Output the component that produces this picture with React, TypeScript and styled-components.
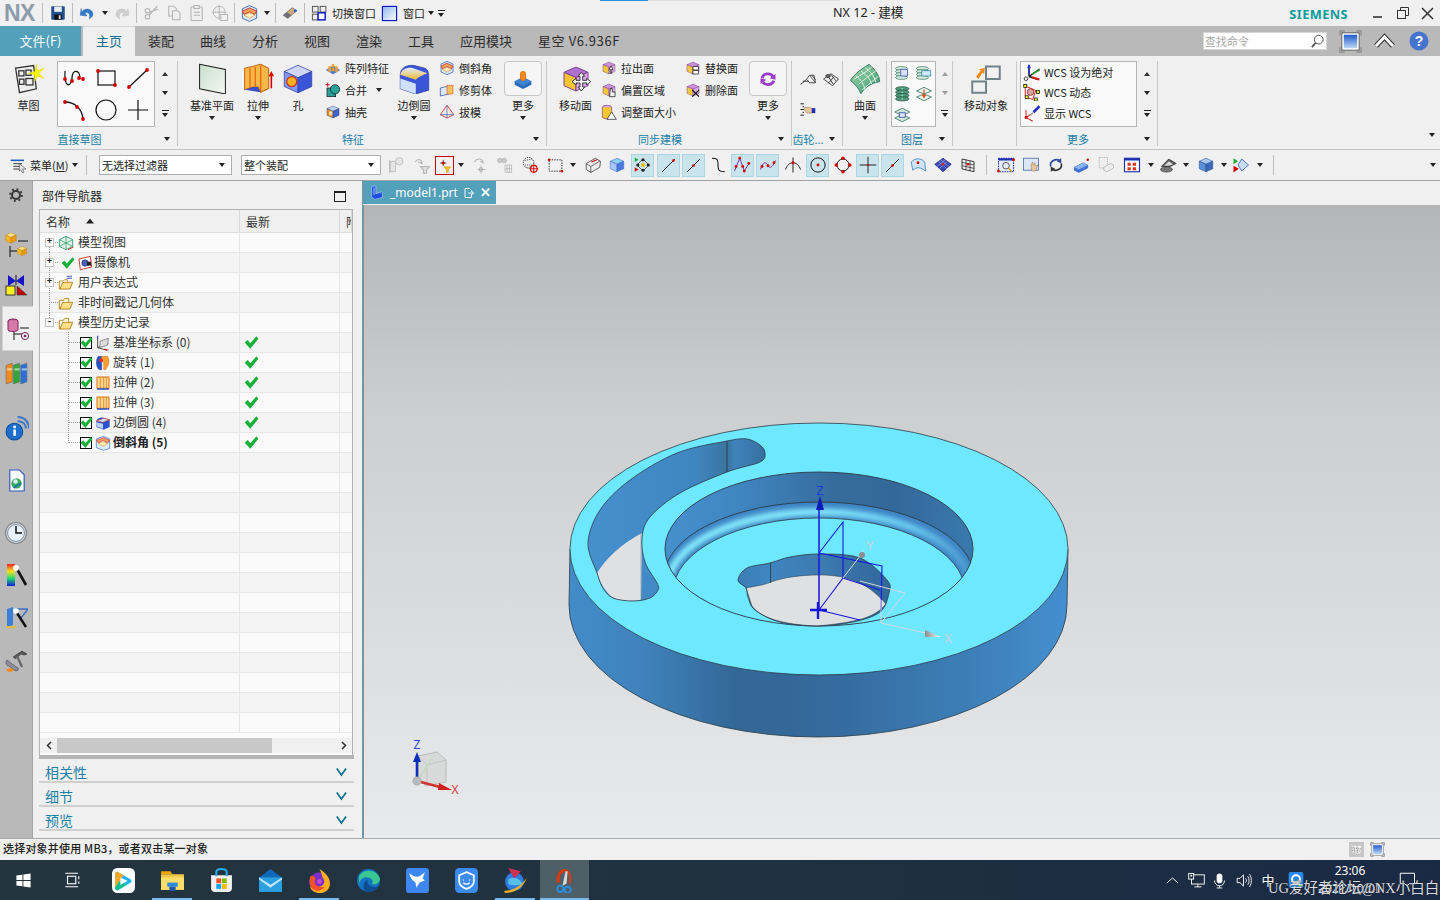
import React, { ReactNode } from "react";
import styled, { createGlobalStyle, css } from "styled-components";

const Global = createGlobalStyle`
  html, body { margin: 0; padding: 0; background: #f0f0f0; overflow: hidden; }
  * { box-sizing: border-box; }
  body { font-family: "Noto Sans CJK SC", "Noto Sans", sans-serif; font-size: 11px; color: #222; }
`;

/* ---------- page frame ---------- */
const Page = styled.div`
  position: relative; width: 1440px; height: 900px; display: flex; flex-direction: column; overflow: hidden; background: #f0f0f0;
`;
const Progress = styled.div`
  position: absolute; left: 600px; top: 0; width: 240px; height: 1px; background: linear-gradient(90deg, #2a8fe0 0 48px, #dcdcdc 48px);
`;
const TitleBar = styled.div`height: 26px; display: flex; align-items: center; background: #f0f0f0; flex: none;`;
const Logo = styled.div`
  width: 36px; padding-left: 4px; font: 700 23px/26px "Liberation Sans", sans-serif; color: #8c9cab; letter-spacing: -0.5px;
`;
const Qat = styled.div`width: 797px; display: flex; align-items: center; height: 26px;`;
const Title = styled.div`font-size: 12.6px; line-height: 26px; color: #222; white-space: nowrap; font-family: "Noto Sans", "Noto Sans CJK SC", sans-serif;`;
const Siemens = styled.div`
  margin: 0 18px 0 auto; font: 700 12.8px/26px "Noto Sans", sans-serif; color: #079b9b; letter-spacing: 0.4px; padding-top: 2px;
`;
const WinBtns = styled.div`display: flex; width: 74px; height: 26px;`;
const WinBtn = styled.div`flex: 1; display: flex; align-items: center; justify-content: center;`;
const QatText = styled.span<{ $ml?: number }>`font-size: 11px; line-height: 26px; white-space: nowrap; margin-left: ${p => p.$ml ?? 0}px;`;

const Cell = styled.div<{ $w: number }>`flex: none; width: ${p => p.$w}px; height: 23px; display: flex; align-items: center; justify-content: center;`;
const CellFace = styled.div<{ $on?: boolean; $red?: boolean }>`
  width: 23px; height: 23px; display: flex; align-items: center; justify-content: center; flex: none;
  ${p => p.$on && css`background: #c9e4ec; border: 1px solid #a9d6e2;`}
  ${p => p.$red && css`width: 19px; height: 19px; border: 1px solid #c40000;`}
`;
const VSep = styled.div<{ $l?: number; $r?: number; $h?: number }>`
  flex: none; width: 1px; height: ${p => p.$h ?? 20}px; background: #bdbdbd; margin: 0 ${p => p.$r ?? 0}px 0 ${p => p.$l ?? 0}px;
`;
const CaretGlyph = styled.i<{ $up?: boolean; $c?: string; $ml?: number; $big?: boolean }>`
  display: block; width: 0; height: 0; border-left: 3.5px solid transparent; border-right: 3.5px solid transparent; margin-left: ${p => p.$ml ?? 0}px;
  ${p => p.$up ? css`border-bottom: 4px solid ${p.$c ?? "#222"};` : css`border-top: 4px solid ${p.$c ?? "#222"};`}
  ${p => p.$big && css`transform: scale(1.3);`}
`;
const MoreGlyph = styled.div`
  display: flex; flex-direction: column; align-items: center; gap: 2px;
  &::before { content: ""; width: 7px; height: 1px; background: #222; }
`;

const TabBar = styled.div`height: 30px; background: #b9b9b9; display: flex; flex: none; align-items: flex-end;`;
const FileTab = styled.div`
  width: 81px; height: 30px; background: #53a0bb; color: #fff; font-size: 13px; line-height: 29px; text-align: center; margin-right: 2px;
`;
const Tab = styled.div<{ $active?: boolean; $w: number; $wide?: boolean }>`
  width: ${p => p.$w}px; height: ${p => p.$active ? 29 : 30}px; text-align: center; font-size: 13px; line-height: ${p => p.$active ? 28 : 29}px; white-space: nowrap;
  color: ${p => p.$active ? "#116f8d" : "#2b2b2b"}; background: ${p => p.$active ? "#f0f0f0" : "transparent"};
  ${p => p.$active && css`box-shadow: 0 -1px 0 #d5d5d5;`}
  ${p => p.$wide && css`letter-spacing: 0.6px;`}
`;
const Search = styled.div`
  margin: 0 0 6px auto; width: 124px; height: 18px; background: #fff; border: 1px solid #d5d5d5; display: flex; align-items: center; padding: 0 1px;
  color: #a8a8a8; font-size: 11px; justify-content: space-between;
`;
const TabTools = styled.div`display: flex; height: 30px; width: 113px; align-items: center; justify-content: flex-start; padding-left: 12px; gap: 9px;`;
const CollapseSvg = styled.svg`margin: 0 2px; display: block;`;
const HelpSvg = styled.svg`margin-left: 2px; display: block;`;

/* ---------- ribbon ---------- */
const Ribbon = styled.div`height: 94px; flex: none; display: flex; padding-top: 5px; background: #f0f0f0; border-bottom: 1px solid #c4c4c4; position: relative;`;
const Group = styled.div<{ $w: number; $noSep?: boolean }>`
  width: ${p => p.$w}px; height: 85px; flex: none; display: flex; flex-direction: column; border-right: 1px solid ${p => p.$noSep ? "transparent" : "#c9c9c9"};
`;
const GroupBody = styled.div<{ $pl?: number }>`height: 71px; display: flex; align-items: flex-start; padding-left: ${p => p.$pl ?? 0}px;`;
const GroupFoot = styled.div<{ $pl?: number }>`height: 14px; display: flex; align-items: center; padding-left: ${p => p.$pl ?? 0}px;`;
const GroupLabel = styled.div`flex: 1; text-align: center; color: #1b7fa6; font-size: 11px; line-height: 14px; white-space: nowrap; overflow: hidden;`;
const GroupCorner = styled.div`width: 18px; display: flex; justify-content: center; padding-right: 2px;`;
const RibbonEnd = styled.div`flex: 1; display: flex; align-items: flex-end; justify-content: flex-end; padding: 0 5px 9px 0; height: 85px;`;

const Big = styled.div<{ $w: number; $ml?: number }>`
  width: ${p => p.$w}px; margin-left: ${p => p.$ml ?? 0}px; flex: none; display: flex; flex-direction: column; align-items: center;
`;
const BigIcon = styled.div<{ $box?: boolean }>`
  height: 35px; display: flex; align-items: center; justify-content: center; align-self: stretch; margin-bottom: 2px;
  ${p => p.$box && css`border: 1px solid #c6c6c6; border-radius: 4px; background: #f5f5f5;`}
`;
const BigLabel = styled.div`font-size: 11px; line-height: 14px; white-space: nowrap; color: #222;`;
const BigCaret = styled.div`margin-top: 4px;`;

const Gallery = styled.div<{ $w: number; $ml?: number }>`
  width: ${p => p.$w}px; height: 66px; margin-left: ${p => p.$ml ?? 0}px; flex: none; background: #f9f9f9; border: 1px solid #b5b5b5; display: grid; grid-template-columns: repeat(${p => (p.$w > 70 ? 3 : 2)}, 1fr); grid-auto-rows: 1fr; align-items: center; justify-items: center;
`;
const ListGallery = styled.div<{ $w: number; $ml?: number }>`
  width: ${p => p.$w}px; height: 66px; margin-left: ${p => p.$ml ?? 0}px; flex: none; background: #f9f9f9; border: 1px solid #b5b5b5; display: flex; flex-direction: column; padding: 0 0 3px 2px;
`;
const ListRow = styled.div`flex: 1; display: flex; align-items: center; gap: 3px; font: 11px/14px "Noto Sans CJK SC", sans-serif; white-space: nowrap;`;
const Arrows = styled.div<{ $w: number }>`
  width: ${p => p.$w}px; height: 66px; flex: none; display: flex; flex-direction: column; align-items: center; justify-content: space-around; padding: 4px 0 3px;
`;
const SmallCol = styled.div<{ $w: number; $ml?: number }>`
  width: ${p => p.$w}px; margin: -4px 0 0 ${p => p.$ml ?? 0}px; flex: none; display: flex; flex-direction: column;
`;
const SmallRow = styled.div`height: 22px; display: flex; align-items: center; gap: 4px; font-size: 11px; line-height: 14px; white-space: nowrap;`;
const IconGrid = styled.div`display: grid; grid-template-columns: 23px 23px; grid-auto-rows: 30px; padding: 3px 0 0 4px; justify-items: center; align-items: center;`;

/* ---------- selection bar ---------- */
const SelBar = styled.div`height: 31px; flex: none; display: flex; align-items: center; background: #f0f0f0; border-bottom: 1px solid #a3a3a3; padding-left: 10px;`;
const MenuBtn = styled.div`width: 76px; display: flex; align-items: center; gap: 4px; font-size: 11px; white-space: nowrap; u { text-decoration: underline; }`;
const Select = styled.div<{ $w: number; $ml: number }>`
  width: ${p => p.$w}px; height: 20px; margin-left: ${p => p.$ml}px; background: #fff; border: 1px solid #aeaeae; display: flex; align-items: center; justify-content: space-between; padding: 0 6px 0 2px; font-size: 11px; flex: none;
`;

/* ---------- main ---------- */
const Main = styled.div`flex: 1; min-height: 0; display: flex;`;
const Rail = styled.div`width: 33px; flex: none; background: #b9b9b9; border-right: 1px solid #a4a4a4; display: flex; flex-direction: column; padding-top: 1px;`;
const RailItem = styled.div<{ $mt: number; $active?: boolean }>`
  margin-top: ${p => p.$mt}px; height: ${p => p.$active ? 45 : 30}px; flex: none; display: flex; align-items: center; justify-content: center;
  ${p => p.$active && css`background: #f0f0f0; margin-left: 2px; margin-right: -1px; border: 1px solid #d4d4d4; border-right: 0;`}
`;
const NavPanel = styled.div`width: 330px; flex: none; background: #f0f0f0; border-right: 1px solid #8e8e8e; display: flex; flex-direction: column; padding-left: 6px;`;
const NavHead = styled.div`height: 28px; flex: none; display: flex; align-items: center; justify-content: space-between; padding: 0 16px 0 3px; font-size: 12px;`;
const MaxBox = styled.div`width: 12px; height: 11px; border: 1px solid #222; border-top-width: 2px; margin-top: 2px;`;
const TreeBox = styled.div`width: 314px; height: 546px; flex: none; border: 1px solid #b3b3b3; border-bottom: 0; background: #fafafa; display: flex; flex-direction: column; overflow: hidden;`;
const TreeHead = styled.div`height: 23px; flex: none; display: flex; background: #f0f0f0; border-bottom: 1px solid #dedede;`;
const HeadCell = styled.div<{ $w: number }>`
  width: ${p => p.$w}px; flex: none; overflow: hidden; white-space: nowrap; display: flex; align-items: center; gap: 17px; padding-left: 6px; font-size: 12px; border-right: 1px solid #d8d8d8; color: #333;
`;
const Rows = styled.div`height: 500px; flex: none; overflow: hidden;`;
const Row = styled.div<{ $alt: boolean }>`
  position: relative; height: 20px; display: flex; background: ${p => p.$alt ? "#f4f4f4" : "#fafafa"}; border-bottom: 1px solid #e6e6e6;
`;
const NameCell = styled.div<{ $pl: number; $bold?: boolean }>`
  width: 200px; flex: none; border-right: 1px solid #e6e6e6; display: flex; align-items: center; padding-left: ${p => p.$pl}px; gap: 4px; font-size: 12px; line-height: 16px; white-space: nowrap; color: #333;
  ${p => p.$bold && css`font-weight: 700; color: #222;`}
`;
const NameText = styled.span<{ $ml: number }>`margin: -2px 0 0 ${p => p.$ml}px;`;
const TickSlot = styled.div`margin-right: -2px; flex: none;`;
const StateCell = styled.div`width: 100px; flex: none; border-right: 1px solid #e6e6e6; display: flex; align-items: center; padding-left: 4px;`;
const Expander = styled.div`
  position: absolute; left: 5px; top: 5px; width: 9px; height: 9px; background: #fafafa; border: 1px solid #c4c4c4; font: 700 9px/7px "Liberation Mono", monospace; text-align: center; color: #222; z-index: 2;
`;
const DotV = styled.div<{ $l: number; $t: number; $h: number }>`
  position: absolute; left: ${p => p.$l}px; top: ${p => p.$t}px; height: ${p => p.$h}px; width: 0; border-left: 1px dotted #999;
`;
const DotH = styled.div<{ $l: number; $w: number }>`
  position: absolute; left: ${p => p.$l}px; top: 9px; width: ${p => p.$w}px; height: 0; border-top: 1px dotted #999;
`;
const Check = styled.div`width: 12px; height: 12px; border: 1px solid #111; background: #fff; display: flex; align-items: center; justify-content: center; flex: none; margin-right: -1px;`;
const ScrollBar = styled.div`height: 20px; flex: none; padding-top: 5px; background: #fafafa; display: flex;`;
const ScrollTrack = styled.div`flex: 1; height: 15px; display: flex; align-items: center; background: #f0f0f0;`;
const ScrollArrow = styled.div`width: 17px; text-align: center; display: flex; justify-content: center;`;
const ScrollThumb = styled.div`width: 215px; height: 15px; background: #c8c8c8;`;
const ScrollRest = styled.div`flex: 1;`;
const Splitter = styled.div`width: 315px; height: 4px; flex: none; background: #b4b4b4;`;
const Accordion = styled.div`
  width: 315px; height: 24px; flex: none; display: flex; align-items: center; justify-content: space-between; padding: 4px 5px 0 6px; border-bottom: 2px solid #d0d0d0;
  color: #1b7fa6; font-size: 14px; line-height: 18px;
`;

const Work = styled.div`flex: 1; min-width: 0; display: flex; flex-direction: column;`;
const DocStrip = styled.div`height: 24px; flex: none; background: #f0f0f0; display: flex;`;
const DocTab = styled.div`
  width: 133px; height: 23px; background: #53a0bb; color: #fff; display: flex; align-items: center; padding-left: 6px; font: 12px/23px "Noto Sans", sans-serif; gap: 4px;
`;
const DocName = styled.span`width: 71px; padding-left: 2px; white-space: nowrap;`;
const DocClose = styled.span`font: 700 13px/20px "Liberation Sans", sans-serif; margin-left: 1px;`;
const Viewport = styled.div`flex: 1; min-height: 0; border-left: 1px solid #53a0bb; background: linear-gradient(180deg, #b4b5b6 0%, #cdced0 33%, #e9eaec 100%);`;
const ModelSvg = styled.svg`display: block; width: 1077px; height: 633px; margin-left: -1px;`;

const Status = styled.div`height: 22px; flex: none; border-top: 1px solid #a9a9a9; background: #f0f0f0; display: flex; align-items: center; padding: 0 55px 3px 3px; font-size: 11px; font-weight: 500; justify-content: space-between; color: #222; letter-spacing: 0.2px;`;
const StatusIcons = styled.div`display: flex; gap: 6px; align-items: center; margin-top: 3px;`;
const StatusFlag = styled.div`width: 15px; height: 15px; background: #c6c6c6; display: flex; align-items: center; justify-content: center;`;

const Taskbar = styled.div`position: relative; height: 40px; flex: none; background: linear-gradient(90deg, #24353f 0%, #20323f 45%, #1a2a45 100%); display: flex; color: #fff;`;
const TaskCell = styled.div<{ $w: number; $active?: boolean; $run?: boolean }>`
  position: relative; width: ${p => p.$w}px; height: 40px; flex: none; display: flex; align-items: center; justify-content: center;
  ${p => p.$active && css`background: #4f5f68;`}
  ${p => p.$run && css`&::after { content: ""; position: absolute; bottom: 0; left: ${p.$active ? 0 : 4.5}px; right: ${p.$active ? 0 : 4.5}px; height: 2px; background: #76b9ed; }`}
`;
const Spacer = styled.div`flex: 1;`;
const TrayText = styled.span`font-size: 13px; line-height: 16px;`;
const Clock = styled.div`width: 78px; text-align: center; font: 12px/18px "Noto Sans", sans-serif; padding-top: 2px; flex: none;`;
const Watermark = styled.div`
  position: absolute; left: 1268px; top: 19px; font: 14.5px/18px "Liberation Serif", "Noto Sans CJK SC", serif; color: #d9dee2; white-space: nowrap; text-shadow: 0 0 1px #111;
`;
const IcoSvg = styled.svg`display: block; flex: none;`;

/* ---------- icons ---------- */
const Dot = (x: number, y: number, c = "#d40000", r = 1.9) => <circle cx={x} cy={y} r={r} fill={c} />;
const cube = (t: string, l: string, r: string, stroke = "#33407a") => (
  <g stroke={stroke} strokeWidth=".7" strokeLinejoin="round">
    <polygon points="12,3 21,7 12,11 3,7" fill={t} /><polygon points="3,7 12,11 12,21 3,17" fill={l} /><polygon points="12,11 21,7 21,17 12,21" fill={r} />
  </g>
);
const faceBase = (extra: ReactNode) => <>{cube("#c890d8", "#f4c73c", "#dcb0e4", "#7c3c90")}{extra}</>;
const layers = (extra: ReactNode) => (
  <g>
    {[6, 10, 14, 18].map(y => <ellipse key={y} cx="10" cy={y} rx="8" ry="2.6" fill="#cfe6d8" stroke="#2e6d54" strokeWidth=".8" />)}
    {extra}
  </g>
);
const faceMarker = (d: string) => <path d={d} fill="#fff" stroke="#111" strokeWidth="1.1" />;

const I: Record<string, ReactNode> = {
  save: <><rect x="3" y="3" width="18" height="18" rx="1" fill="#234f8d" /><rect x="7" y="3.5" width="10" height="7" fill="#e8eef6" /><rect x="7" y="14" width="10" height="7" fill="#111" /><rect x="13" y="15" width="2.5" height="5" fill="#ddd" /></>,
  undo: <path d="M5 11 C8 5 18 5 20 13 C20 16 18 18 15 20 C17 14 14 10 9 12 L12 16 L3 15 L4 6 Z" fill="#2e7bcc" stroke="#1a5aa0" strokeWidth=".5" />,
  redo: <path d="M19 11 C16 5 6 5 4 13 C4 16 6 18 9 20 C7 14 10 10 15 12 L12 16 L21 15 L20 6 Z" fill="#cfcfcf" stroke="#b0b0b0" strokeWidth=".5" />,
  cut: <g fill="none" stroke="#b5b5b5" strokeWidth="1.6"><path d="M19 3 L8 15 M20 7 L8 11" /><circle cx="6" cy="17" r="3" /><circle cx="6" cy="9" r="3" /></g>,
  copy: <g fill="#efefef" stroke="#b5b5b5" strokeWidth="1.4"><path d="M5 3 H12 L15 6 V16 H5 Z" /><path d="M10 9 H17 L20 12 V21 H10 Z" /></g>,
  paste: <g fill="#efefef" stroke="#b5b5b5" strokeWidth="1.4"><rect x="4" y="4" width="15" height="18" rx="1" /><rect x="8" y="2" width="7" height="4" /><path d="M8 11 H16 M8 15 H16" /></g>,
  pasteTarget: <g fill="none" stroke="#b5b5b5" strokeWidth="1.3"><circle cx="11" cy="11" r="8" /><path d="M11 1 V21 M1 11 H21" /><rect x="13" y="14" width="9" height="8" fill="#efefef" /></g>,
  chamfer: <><polygon points="3,6 12,2 21,6 21,18 12,22 3,18" fill="#d9e8f8" stroke="#2a55aa" strokeWidth="1" /><polygon points="3,9 12,5 21,9 19,13 12,10 5,13" fill="#f0a35c" stroke="#c02020" strokeWidth="1" /><polygon points="5,14 12,11 19,14 12,18" fill="#fff4c8" stroke="#e28020" strokeWidth=".8" /></>,
  eraser: <><polygon points="3,15 15,5 21,9 9,19" fill="#d4a878" stroke="#555" strokeWidth=".8" /><polygon points="3,15 8,11 14,15 9,19" fill="#6d6d7a" /><circle cx="19" cy="9" r="2" fill="#2e6ccc" /></>,
  switchWin: <><g fill="none" stroke="#555" strokeWidth="1.4"><rect x="2" y="2" width="8" height="8" /><rect x="13" y="2" width="8" height="8" /><rect x="2" y="13" width="8" height="8" /></g><rect x="10" y="11" width="10" height="10" fill="#fff" stroke="#0814c8" strokeWidth="2" /></>,
  window: <><defs><linearGradient id="wg" x1="0" y1="0" x2="1" y2="1"><stop offset="0" stopColor="#8fb7e8" /><stop offset="1" stopColor="#fff" /></linearGradient></defs><rect x="2" y="2" width="20" height="20" fill="url(#wg)" stroke="#0814c8" strokeWidth="1.6" /></>,

  sketch: <><polygon points="2,4 16,2 18,20 5,23" fill="#eee" stroke="#333" strokeWidth="1" /><rect x="4.5" y="6" width="4" height="4" fill="#eee" stroke="#333" /><rect x="10" y="5.5" width="4" height="4" fill="#eee" stroke="#333" /><rect x="5" y="12.5" width="3.5" height="4" fill="#eee" stroke="#333" /><rect x="10" y="12" width="5.5" height="5" fill="#eee" stroke="#333" /><polygon points="18,1 19,6 24,4 20,8 24,12 19,10 17,14 16.5,9 12,8 17,6.5" fill="#f8f400" stroke="#e8e000" strokeWidth=".4" /></>,
  skSpline: <><path d="M3 5 C2 22 9 22 10 12 C10 3 18 3 18 13" fill="none" stroke="#111" strokeWidth="1.2" />{Dot(3, 13)}{Dot(10, 15)}{Dot(17, 12)}{Dot(21, 13)}</>,
  skRect: <><rect x="4" y="5" width="17" height="14" fill="none" stroke="#111" strokeWidth="1.2" />{Dot(4, 5)}{Dot(21, 19)}</>,
  skLine: <><path d="M3 21 L21 4" stroke="#111" strokeWidth="1.2" />{Dot(3, 21)}{Dot(21, 4)}</>,
  skArc: <><path d="M3 4 C12 4 20 10 21 21" fill="none" stroke="#111" strokeWidth="1.3" />{Dot(3, 4)}{Dot(15, 9)}{Dot(21, 21)}</>,
  skCircle: <circle cx="12" cy="12" r="10" fill="none" stroke="#111" strokeWidth="1.2" />,
  skPlus: <path d="M12 2 V22 M2 12 H22" stroke="#111" strokeWidth="1.2" />,

  datum: <><defs><linearGradient id="dg" x1="0" y1="0" x2="1" y2="1"><stop offset="0" stopColor="#c8e0cc" /><stop offset="1" stopColor="#f4f8f4" /></linearGradient></defs><polygon points="2,1 22,5 22,24 2,20" fill="url(#dg)" stroke="#222" strokeWidth=".8" /></>,
  extrude: <><polygon points="2,4 14,1 20,4 20,19 14,22 12,18 8,18 2,20" fill="#f7b84a" stroke="#c86a10" strokeWidth=".8" /><path d="M6 4 V20 M10 3 V18 M14 2 V22" stroke="#f06a10" strokeWidth="1" /><polygon points="2,20 8,18 12,18 14,22" fill="#3a50c0" /><path d="M22 19 V9" stroke="#d00" strokeWidth="1.2" /><polygon points="22,6 20,10 24,10" fill="#d00" /></>,
  hole: <><polygon points="12,1 23,6 12,11 1,6" fill="#cfd6f8" stroke="#3040a0" strokeWidth=".6" /><polygon points="1,6 12,11 12,23 1,18" fill="#7f9af0" stroke="#3040a0" strokeWidth=".6" /><polygon points="12,11 23,6 23,18 12,23" fill="#3a55d8" stroke="#3040a0" strokeWidth=".6" /><circle cx="7" cy="14" r="4" fill="#f8b020" stroke="#d03020" /></>,
  pattern: <><polygon points="2,15 12,9 22,15 12,21" fill="#4f7fd8" stroke="#2a4a98" strokeWidth=".6" />{[[7, 12], [12, 9], [17, 12], [12, 15], [7, 16], [17, 16]].map(([x, y]) => <rect key={`${x}${y}`} x={x - 2} y={y - 3} width="4" height="5" rx="1.4" fill="#f5a030" />)}</>,
  unite: <><path d="M4 1 V7 M1 4 H7" stroke="#d00" strokeWidth="1.4" /><rect x="3" y="9" width="13" height="13" fill="#2aa198" stroke="#111" /><circle cx="15" cy="11" r="7" fill="#2aa198" stroke="#111" /></>,
  shell: <>{cube("#bcd2f4", "#f0861e", "#3b66cf")}<rect x="6" y="11" width="5" height="6" fill="#f8e0a0" /></>,
  blend: <><defs><linearGradient id="bg1" x1="0" y1="0" x2="0" y2="1"><stop offset="0" stopColor="#dde9fb" /><stop offset="1" stopColor="#f4bd2c" /></linearGradient></defs><path d="M1 9 C1 4 6 1 12 2 L20 4 C23 5 23 9 23 11 L23 21 L13 24 L1 20 Z" fill="#3b55d8" stroke="#3040a0" strokeWidth=".6" /><path d="M1 9 C2 5 6 3 11 4 L22 8 C20 9 16 10 13 13 Z" fill="url(#bg1)" /><path d="M1 12 L13 16 L13 24 L1 20 Z" fill="#cfe0fa" /></>,
  trim: <><polygon points="2,9 15,6 15,18 2,21" fill="#dbe7fb" stroke="#2a40a8" /><rect x="12" y="5" width="9" height="13" fill="#f4c258" stroke="#d03020" strokeDasharray="2 1" /></>,
  draft: <><polygon points="12,2 22,16 12,21 2,16" fill="#f9f0e0" stroke="#d02020" strokeWidth="1.2" /><path d="M12 2 V21 M2 16 L22 16" stroke="#2b55c8" strokeWidth="1" /></>,
  more1: <><polygon points="2,15 12,10 22,15 12,20" fill="#3a86d8" stroke="#1e5aa8" strokeWidth=".6" /><path d="M2 15 V19 L12 24 L22 19 V15 L12 20 Z" fill="#2a68bc" /><rect x="9" y="3" width="6" height="11" rx="2.6" fill="#f58a14" stroke="#d86a10" /></>,
  moveFace: <>{cube("#b070d0", "#f6c62e", "#d8a8e8", "#7c3c90")}<g fill="#f4f4f4" stroke="#333" strokeWidth=".7"><path d="M16 7 L18.5 10 H17 V13 H20 V11.5 L23 14 L20 16.5 V15 H17 V18 H18.5 L16 21 L13.5 18 H15 V15 H12 V16.5 L9 14 L12 11.5 V13 H15 V10 H13.5 Z" /></g></>,
  pull: faceBase(faceMarker("M15 9 L18 14 H16 V20 H14 V14 H12 Z")),
  offset: faceBase(faceMarker("M14 10 H17 V15 H21 V22 H13 Z")),
  resize: <><ellipse cx="9" cy="5" rx="7" ry="3" fill="#d8a8e8" stroke="#7c3c90" /><path d="M2 5 V20 C4 23 14 23 16 20 V5" fill="#f6c62e" stroke="#7c3c90" /><polygon points="16,12 23,23 9,23" fill="#fff" stroke="#111" /></>,
  replace: faceBase(<><rect x="12" y="10" width="8" height="5" fill="#fff" stroke="#111" /><rect x="12" y="16" width="8" height="5" fill="#fff" stroke="#111" /></>),
  del: faceBase(<path d="M11 12 L21 22 M21 12 L11 22" stroke="#111" strokeWidth="1.8" />),
  sync: <g fill="none" stroke="#9a3cc8" strokeWidth="3.4"><path d="M5 11 C6 5 15 4 18 9" /><path d="M19 14 C17 20 9 20 6 16" /><polygon points="21,6 21,13 14,11" fill="#9a3cc8" stroke="none" /><polygon points="3,18 3,11 10,13" fill="#9a3cc8" stroke="none" /></g>,
  gearA: <g fill="none" stroke="#222" strokeWidth="1.1"><path d="M2 19 C6 17 10 13 14 7 L20 7 L22 17 L14 17 L11 13" /><path d="M15 8 L21 16 M17 7 L22 13" strokeWidth=".9" /><path d="M5 15 L12 15" /></g>,
  gearB: <g stroke="#222" strokeWidth="1"><path d="M2 12 L12 5 L22 12 L14 21 Z" fill="#e8e8e8" /><path d="M8 8 L15 19 M12 6 L19 15 M16 9 L8 18" fill="none" /><ellipse cx="8" cy="8" rx="3" ry="2" fill="#777" /></g>,
  gearC: <><path d="M2 4 H7 M5 8 H7 M2 12 H7 M5 16 H7 M2 20 H7" stroke="#111" strokeWidth="1.3" /><path d="M8 9 H15 L19 11 V17 H11 L8 13 Z" fill="#e8c49a" stroke="#8a6a48" strokeWidth=".7" /><rect x="18" y="10" width="5" height="7" fill="#1c2fb0" /></>,
  surface: <><defs><linearGradient id="sfg" x1="0" y1="0" x2="1" y2="1"><stop offset="0" stopColor="#9ed6a4" /><stop offset="1" stopColor="#3e9a78" /></linearGradient></defs><path d="M1 13 C6 6 12 3 15 1 C20 5 23 10 23 14 C17 15 12 18 9 23 C7 19 5 16 1 13 Z" fill="url(#sfg)" stroke="#3a7a66" strokeWidth=".7" /><path d="M5 9.5 C9 12 11 16 12 20 M9 6 C13 9 16 12 17 16 M12 3.5 C16 6 19 10 20 14.5 M4 12 C9 9 14 6 17 3 M7 16 C12 12 16 9 20 6 M10 20 C14 17 18 13 22 10" stroke="#eaf6ea" strokeWidth=".7" fill="none" /></>,
  moveObj: <><rect x="12" y="2" width="11" height="10" fill="#f2f2f2" stroke="#6f8288" strokeWidth="1.6" /><rect x="1" y="14" width="11" height="9" fill="#f2f2f2" stroke="#6f8288" strokeWidth="1.6" /><polygon points="4,10 8,5 6,4.5 11,3 10.5,8 9,7 6,12" fill="#f18a1c" /></>,
  lay1: layers(<rect x="9" y="7" width="9" height="9" fill="#d8e4fb" stroke="#2a40a8" strokeWidth=".9" />),
  lay2: layers(<rect x="9" y="9" width="12" height="7" fill="#cfe8f6" stroke="#1a78aa" strokeWidth=".9" />),
  lay3: <g>{[5, 9.5, 14, 18.5].map(y => <ellipse key={y} cx="11" cy={y} rx="9" ry="2.8" fill="#4f9a76" stroke="#1c4f3c" strokeWidth=".9" />)}{[5, 9.5, 14, 18.5].map(y => <circle key={y} cx="11" cy={y} r="1" fill="#b8d8ff" />)}</g>,
  lay4: <g><polygon points="12,3 22,8 12,12 2,8" fill="#e8f4ea" stroke="#2e6d54" /><polygon points="12,12 22,16 12,21 2,16" fill="#e8f4ea" stroke="#2e6d54" /><path d="M12 6 V15" stroke="#e04a18" strokeWidth="1.6" /><polygon points="12,18 9,13 15,13" fill="#e04a18" /></g>,
  lay5: <g><polygon points="11,3 21,8 11,13 1,8" fill="#cfe6d8" stroke="#2e6d54" /><polygon points="11,11 21,16 11,21 1,16" fill="#cfe6d8" stroke="#2e6d54" /><rect x="7" y="9" width="8" height="6" fill="#d8e4fb" stroke="#2a40a8" /></g>,
  wcsAbs: <><path d="M8 18 V3 M8 18 L22 8 M8 18 L20 22" strokeWidth="1.8" stroke="#111" /><polygon points="8,1 5.5,7 10.5,7" fill="#1c2fd0" /><path d="M8 8 V15" stroke="#1c2fd0" strokeWidth="2" /><path d="M12 15 L22 9" stroke="#2a9a30" strokeWidth="2.5" /><path d="M12 19 L22 22" stroke="#d02020" strokeWidth="2.5" /><circle cx="4" cy="21" r="2.4" fill="none" stroke="#111" /></>,
  wcsDyn: <><polygon points="3,4 17,10 13,22 3,18" fill="none" stroke="#d02020" strokeWidth="1.3" /><circle cx="10" cy="12" r="4.5" fill="#d8a0a0" stroke="#902020" />{[[3, 4], [20, 12], [5, 19], [17, 22]].map(([x, y]) => <rect key={`${x}`} x={x - 2} y={y - 2} width="4" height="4" fill="#ff0" stroke="#111" />)}</>,
  wcsShow: <><path d="M4 18 L4 8 M4 18 L13 23 M4 18 L12 13" stroke="#e03030" strokeWidth="1.4" />{Dot(4, 18)}<path d="M14 11 L22 3" stroke="#2030c8" strokeWidth="3.6" /><path d="M10 15 L14 11" stroke="#aaa" strokeWidth="2" /></>,

  menu: <><path d="M1 5 H21" stroke="#1a5fc0" strokeWidth="2.4" /><path d="M5 10 H18 M5 14 H16 M5 18 H14" stroke="#333" strokeWidth="1.4" /><polygon points="14,10 24,18 19,18 21,23 18,23 16,19 14,21" fill="#e8e8e8" stroke="#333" strokeWidth=".8" /></>,
  f1: <g fill="#e4e4e4" stroke="#b5b5b5" strokeWidth="1"><rect x="3" y="7" width="7" height="14" /><circle cx="15" cy="7" r="5" /><path d="M2 5 V23" /></g>,
  f2: <g stroke="#b5b5b5" strokeWidth="1.5" fill="none"><path d="M3 8 C7 2 12 5 12 10 L7 8" /><polygon points="10,14 22,14 18,19 18,23 14,23 14,19" fill="#ddd" /></g>,
  f3: <><path d="M10 3 V13 M5 8 H15" stroke="#111" strokeWidth="1.1" /><circle cx="10" cy="8" r="2.5" fill="#d40000" /><polygon points="11,14 22,14 18,19 18,23 15,23 15,19" fill="#f8c020" stroke="#b88000" strokeWidth=".6" /></>,
  f4: <g stroke="#b5b5b5" fill="none" strokeWidth="1.4"><path d="M3 8 C7 2 14 3 15 9 L11 7" /><path d="M12 13 V23 M7 18 H18" /><circle cx="12" cy="18" r="2.4" /></g>,
  f5: <g fill="#c8c8c8" stroke="#aaa" strokeWidth=".8"><circle cx="5" cy="6" r="3" /><circle cx="11" cy="6" r="3" /><rect x="12" y="12" width="9" height="10" fill="#eee" /><path d="M15 12 V22 M18 12 V22 M12 17 H21" /></g>,
  sel1: <><circle cx="10" cy="9" r="7" fill="none" stroke="#222" strokeDasharray="1.6 1.4" strokeWidth="1.3" /><path d="M5 6 L15 4 M5 12 L15 12" stroke="#222" strokeDasharray="1.5 1.5" /><circle cx="17" cy="17" r="4.5" fill="none" stroke="#d40000" strokeWidth="1.5" /><path d="M17 11 V23 M11 17 H23" stroke="#d40000" strokeWidth="1.2" /></>,
  sel2: <><rect x="3" y="4" width="18" height="16" fill="none" stroke="#111" strokeWidth="1.2" strokeDasharray="2 1.6" />{Dot(3, 4)}{Dot(21, 20)}</>,
  sel3: <><polygon points="3,10 15,3 22,7 21,15 9,22 3,18" fill="#eee" stroke="#444" strokeWidth="1.1" /><path d="M3 10 L9 14 L21 7 M9 14 V22" stroke="#444" fill="none" /><path d="M10 8 L17 5" stroke="#d40000" strokeWidth="1.4" /></>,
  sel4: <>{cube("#8cd0f0", "#a8c8f8", "#4a78e0", "#3a64c8")}</>,
  snapA: <><polygon points="12,4 20,12 12,20 4,12" fill="none" stroke="#333" strokeWidth="1" />{Dot(12, 12, "#f0c000", 2.6)}{[[12, 5], [19, 12], [12, 19], [5, 12]].map(([x, y]) => <circle key={`${x}${y}`} cx={x} cy={y} r="2.1" fill="#222" />)}<polygon points="1,2 6,5 1,8" fill="#1caa30" /><polygon points="1,15 6,18 1,21" fill="#d40000" /></>,
  sl: <><path d="M3 21 L21 3" stroke="#111" strokeWidth="1.2" />{Dot(19, 5)}</>,
  slm: <><path d="M3 21 L21 3" stroke="#111" strokeWidth="1.2" />{Dot(12, 12)}</>,
  sCurve: <path d="M4 3 C11 3 12 4 12 11 C12 19 13 21 21 21" fill="none" stroke="#111" strokeWidth="1.4" />,
  zig: <><path d="M2 20 L9 3 L15 20 L22 9" fill="none" stroke="#7a20a8" strokeWidth="1.2" />{Dot(4, 14)}{Dot(9, 3)}{Dot(13, 14)}{Dot(15, 20)}{Dot(21, 10)}</>,
  wave: <><path d="M2 18 C6 6 10 8 12 13 C15 18 19 13 22 6" fill="none" stroke="#7a20a8" strokeWidth="1.2" />{Dot(4, 14)}{Dot(12, 13)}{Dot(20, 9)}</>,
  tangent: <><path d="M2 18 C6 6 18 6 22 18" fill="none" stroke="#111" strokeWidth="1.2" /><path d="M12 2 V22" stroke="#111" strokeWidth="1.2" /><circle cx="12" cy="9" r="2" fill="#d40000" /></>,
  cen: <><circle cx="12" cy="12" r="9.5" fill="none" stroke="#111" strokeWidth="1.3" />{Dot(12, 12)}</>,
  quad: <><circle cx="12" cy="12" r="8" fill="none" stroke="#111" strokeWidth="1.2" />{Dot(12, 3, "#d40000", 2.4)}{Dot(21, 12, "#d40000", 2.4)}{Dot(12, 21, "#d40000", 2.4)}{Dot(3, 12, "#d40000", 2.4)}</>,
  crossX: <><path d="M12 1 V23 M1 12 H23" stroke="#111" strokeWidth="1.2" />{Dot(12, 12, "#d40000", 1.4)}</>,
  bend: <><path d="M3 8 C9 1 18 4 21 8 L22 20 C16 15 10 14 5 19 Z" fill="#cfe6f8" stroke="#2c78b8" />{Dot(12, 9)}</>,
  mesh: <><polygon points="12,3 23,11 12,21 1,11" fill="#3848b8" stroke="#1c2878" /><path d="M6 7 L17 17 M9 5 L20 14 M18 7 L7 17 M15 5 L4 14" stroke="#c8c8e8" strokeWidth=".7" /><circle cx="12" cy="11" r="1.8" fill="#d02020" /></>,
  grid: <><polygon points="3,3 21,7 21,22 3,18" fill="none" stroke="#111" strokeWidth="1.2" /><path d="M9 4 V19 M15 6 V21 M3 8 L21 12 M3 13 L21 17" stroke="#111" />{Dot(12, 11)}</>,
  vzoom: <><rect x="2" y="3" width="20" height="18" fill="#e4ecf8" stroke="#1c2fb0" strokeWidth="1.4" strokeDasharray="2 1.2" /><rect x="2" y="3" width="20" height="3" fill="#1c2fb0" /><circle cx="12" cy="13" r="4.4" fill="none" stroke="#555" strokeWidth="1.3" /><path d="M15 16 L20 21" stroke="#c89a20" strokeWidth="1.6" />{Dot(2, 20)}{Dot(22, 5)}</>,
  vpan: <><rect x="2" y="3" width="20" height="16" fill="#dce6f6" stroke="#5a7ab0" strokeWidth="1.2" /><path d="M12 12 L14 8 L15 12 L17 9 L18 13 L21 12 L18 20 H13 Z" fill="#e8c49a" stroke="#9a7a50" strokeWidth=".7" /></>,
  vrot: <g fill="none" stroke="#2a4a9a" strokeWidth="2.2"><path d="M5 14 C3 7 11 3 17 6" /><path d="M19 10 C21 17 13 21 7 18" stroke="#333" /><polygon points="19,3 19,10 13,7" fill="#2a4a9a" stroke="none" /><polygon points="5,21 5,14 11,17" fill="#333" stroke="none" /></g>,
  vpersp: <><polygon points="3,15 15,9 21,12 21,16 9,22 3,19" fill="#3b72d8" stroke="#1e4aa0" strokeWidth=".6" /><polygon points="3,15 15,9 21,12 9,18" fill="#88b4f0" />{Dot(21, 5, "#d40000", 1.6)}</>,
  vcopy: <g fill="#eee" stroke="#b5b5b5" strokeWidth="1.1"><rect x="3" y="2" width="11" height="14" strokeDasharray="2 1" /><polygon points="9,15 18,10 22,12 22,16 13,21 9,19" /></g>,
  vlayout: <><rect x="2" y="3" width="20" height="18" fill="#fff" stroke="#1c2fb0" strokeWidth="1.5" /><rect x="2" y="3" width="20" height="3" fill="#1c2fb0" />{[[6, 9], [13, 9], [6, 15], [13, 15]].map(([x, y]) => <rect key={`${x}${y}`} x={x} y={y} width="4.4" height="4" fill="#e0341c" />)}</>,
  vshade: <><polygon points="3,14 13,4 23,10 13,15" fill="#5a5a5a" stroke="#222" strokeWidth=".8" /><polygon points="7,13 13,7 19,11 13,13" fill="#d8d8d8" /><ellipse cx="10" cy="18" rx="8" ry="3.5" fill="#777" stroke="#222" strokeWidth=".7" /></>,
  vcube: <>{cube("#a8c8f0", "#5a90d8", "#3a68b8", "#2a4a88")}</>,
  vflag: <><polygon points="2,3 8,7 2,11" fill="#1caa30" /><polygon points="2,13 9,17 2,22" fill="#d40000" /><polygon points="13,4 22,12 13,20 8,12" fill="#c8dcf8" stroke="#2a55a8" /></>,
  gear: <g><circle cx="12" cy="12" r="6" fill="none" stroke="#333" strokeWidth="3" /><circle cx="12" cy="12" r="9" fill="none" stroke="#333" strokeWidth="2.5" strokeDasharray="3 4" /></g>,
  railAsm: <><g transform="translate(0 -2) scale(.58)">{cube("#fbe18a", "#f6b820", "#e99a10", "#b87810")}</g><g transform="translate(12 12) scale(.5)">{cube("#fbe18a", "#f6b820", "#e99a10", "#b87810")}</g><path d="M14 8 H24 M6 18 H13 M6 13 V24" stroke="#111" strokeWidth="1" /></>,
  railCon: <><polygon points="4,2 12,8 4,13" fill="#1414c8" /><polygon points="20,2 12,8 20,13" fill="#1414c8" /><path d="M12 2 V12" stroke="#111" /><rect x="2" y="13" width="9" height="9" fill="#f8f020" stroke="#333" /><polygon points="13,13 23,22 13,22" fill="#c40000" stroke="#333" strokeWidth=".6" /></>,
  railPart: <><ellipse cx="7" cy="4" rx="5" ry="2" fill="#c46a9a" stroke="#802060" /><path d="M2 4 V13 C3 15 11 15 12 13 V4" fill="#d87aa8" stroke="#802060" /><path d="M14 11 H23 M8 17 H16 M8 15 V23" stroke="#111" /><circle cx="19" cy="19" r="3.6" fill="none" stroke="#802060" /><circle cx="19" cy="19" r="1.3" fill="#802060" /></>,
  railBook: <>{[["#f28a1c", 2], ["#2fa838", 9], ["#2a70d8", 16]].map(([c, x]) => <g key={String(x)}><polygon points={`${x},5 ${Number(x) + 6},3 ${Number(x) + 6},21 ${x},23`} fill={String(c)} stroke="#666" strokeWidth=".5" /><rect x={Number(x) + 1} y="8" width="5" height="2" fill="#fff" opacity=".55" /></g>)}</>,
  railInfo: <><circle cx="10" cy="15" r="8" fill="#1c6fd0" stroke="#0e4a98" /><rect x="9" y="13" width="2.4" height="6" fill="#fff" /><circle cx="10.2" cy="10.5" r="1.4" fill="#fff" /><g fill="none" stroke="#3a78c8" strokeWidth="2"><path d="M13 5 C18 5 21 8 21 12" /><path d="M13 1 C20 1 24 6 24 12" /></g></>,
  railDoc: <><path d="M5 1 H15 L20 6 V23 H5 Z" fill="#fff" stroke="#2a55b8" strokeWidth="1.2" /><circle cx="12" cy="15" r="5.4" fill="#3aa85a" /><circle cx="11" cy="13" r="2.4" fill="#d8eef8" /><path d="M9 20 C12 17 15 16 17 15" stroke="#1c70c0" strokeWidth="1.6" fill="none" /></>,
  railClock: <><circle cx="12" cy="12" r="10.5" fill="#ccd5e4" stroke="#888" strokeWidth="1.2" /><circle cx="12" cy="12" r="8.4" fill="#e8f0fa" stroke="#5e6f88" strokeWidth=".7" /><path d="M12 5 V12 H18" fill="none" stroke="#111" strokeWidth="1.5" /></>,
  railRole: <><defs><linearGradient id="rb" x1="0" y1="0" x2="0" y2="1"><stop offset="0" stopColor="#f02020" /><stop offset=".33" stopColor="#f8e020" /><stop offset=".66" stopColor="#20d870" /><stop offset="1" stopColor="#1020d8" /></linearGradient></defs><rect x="3" y="1" width="8" height="22" fill="url(#rb)" /><path d="M13 6 L22 22" stroke="#111" strokeWidth="2.6" /><circle cx="12" cy="5" r="3" fill="#fff" /></>,
  railRole2: <><polygon points="3,3 9,1 9,19 3,21" fill="#3a80d8" /><polygon points="12,3 24,3 17,12 14,9" fill="none" stroke="#3a70c8" strokeWidth="1.4" /><path d="M2 21 H12" stroke="#e8c020" strokeWidth="1.6" /><path d="M13 7 L22 21" stroke="#111" strokeWidth="2.4" /><circle cx="12" cy="5" r="2.8" fill="#fff" /></>,
  railTool: <><path d="M9 9 L18 3 L23 6 L20 7 L17 6 L11 11" fill="#555" stroke="#333" strokeWidth=".6" /><path d="M13 8 L18 19" stroke="#666" strokeWidth="2.2" /><path d="M3 12 L8 16 L14 20 C16 22 12 24 10 22 L5 18 C2 18 1 14 3 12 Z" fill="#8a8f9a" stroke="#444" strokeWidth=".6" /><ellipse cx="6" cy="22" rx="3.4" ry="1.8" fill="#f08a1c" /></>,
  tick: <path d="M1 12 L6 8 L10 13 L20 2 L23 6 L10 22 Z" fill="#17b13a" />,
  tCam: <><polygon points="3,6 20,2 22,18 5,22" fill="#fff" stroke="#d03020" strokeWidth="1.4" /><circle cx="12" cy="12" r="4.8" fill="#4a60b8" stroke="#1c2878" /><rect x="15" y="10" width="6" height="6" fill="#222" /></>,
  tView: <><polygon points="12,2 22,7 22,17 12,22 2,17 2,7" fill="#e4f4ea" stroke="#1d9464" strokeWidth="1.2" /><path d="M12 2 V22 M2 7 L22 17 M22 7 L2 17" stroke="#1d9464" /><path d="M15 22 L23 18" stroke="#d03020" strokeWidth="1.5" /></>,
  tFolder: <><path d="M2 8 V21 H18 L22 11 H7 L3 21" fill="#ffe08a" stroke="#a87000" strokeWidth="1.2" strokeLinejoin="round" /><path d="M2 8 H8 L10 5 H16 V11" fill="#fff3c8" stroke="#a87000" strokeWidth="1.1" /></>,
  tExpr: <><path d="M2 9 V21 H18 L22 11 H7 L3 21" fill="#ffe08a" stroke="#a87000" strokeWidth="1.2" /><path d="M2 9 H8 L10 7 H14 V11" fill="#fff3c8" stroke="#a87000" /><path d="M13 2 H21 M13 5 H21" stroke="#1c2fb0" strokeWidth="1.2" /></>,
  tDatum: <><path d="M4 19 L4 4 M4 19 L20 13 M4 19 L18 23" stroke="#222" strokeWidth="1.2" /><polygon points="8,9 20,5 19,15 7,19" fill="#ddd" stroke="#333" strokeWidth=".7" /><path d="M4 1 V5" stroke="#1c2fd0" strokeWidth="1.6" /><path d="M14 21 L20 23" stroke="#d02020" strokeWidth="1.6" /></>,
  tRev: <><path d="M5 2 C1 6 1 18 6 22 H10 V2 Z" fill="#2a50c8" stroke="#1a2878" strokeWidth=".6" /><path d="M10 2 H19 C22 6 22 14 16 22 H13 V10 H10 Z" fill="#f7a030" stroke="#c86010" strokeWidth=".6" /><circle cx="9" cy="8" r="3" fill="#e03020" /></>,
  tExt: <><rect x="3" y="3" width="18" height="17" fill="#f8d890" stroke="#e0700c" strokeWidth="1.5" /><path d="M8 3 V20 M13 3 V20 M17 3 V20" stroke="#e0700c" /><path d="M3 21 H21" stroke="#2a50c8" strokeWidth="2.2" /></>,
  tBlend: <><path d="M2 9 C3 5 8 3 13 4 L22 7 V18 L13 22 L2 18 Z" fill="#2a50d0" /><path d="M2 9 L13 5 L22 7 L12 11 Z" fill="#cfe0fa" stroke="#d03020" strokeWidth=".9" /><path d="M2 11 L12 13 V21 L2 17 Z" fill="#b8d0f4" /></>,
  tCham: <><polygon points="2,6 13,2 22,6 22,20 13,23 2,19" fill="#dcebfb" stroke="#2a70c8" strokeWidth="1" /><polygon points="2,8 13,4 22,8 19,12 12,8 5,12" fill="#f5a060" stroke="#d02020" strokeWidth=".9" /><polygon points="5,13 12,10 19,13 12,17" fill="#fff2b0" stroke="#e08020" strokeWidth=".7" /></>,
  partTab: <><path d="M4 4 C4 2 8 1 11 2 V14 L20 11 C22 11 22 13 21 14 L22 20 L9 23 L4 19 Z" fill="#1f4fe0" stroke="#bcd0ff" strokeWidth="1" /><path d="M8 4 V16" stroke="#a8c4ff" strokeWidth="1.6" /></>,
  popout: <g fill="none" stroke="#fff" strokeWidth="1.8"><path d="M17 14 V21 H4 V3 H13 L17 7 V9" /><path d="M10 12 H21 M17 8 L21 12 L17 16" /></g>,
  find: <g fill="none" stroke="#555" strokeWidth="1.6"><circle cx="14" cy="9" r="7" fill="#fff" /><path d="M9 14 L3 21" strokeWidth="3" /></g>,
  frame: <><path d="M1 6 V1 H6 M18 1 H23 V6 M23 18 V23 H18 M6 23 H1 V18" fill="none" stroke="#909090" strokeWidth="1.4" /><defs><linearGradient id="fg" x1="0" y1="0" x2="0" y2="1"><stop offset="0" stopColor="#1452c8" /><stop offset="1" stopColor="#c8e0f8" /></linearGradient></defs><rect x="4" y="4" width="16" height="16" rx="1" fill="url(#fg)" stroke="#fff" strokeWidth="2" /><rect x="3" y="3" width="18" height="18" fill="none" stroke="#444" strokeWidth=".8" /></>,
  flagGray: <><path d="M3 3 L21 5 L19 20 L5 18 Z" fill="#eee" /><path d="M6 4 L9 18 M13 4 L14 19 M3 9 L21 11 M4 14 L20 15" stroke="#777" strokeWidth="1.6" strokeDasharray="2 2" /></>,

  tWin: <g fill="#fff"><polygon points="2,5 10.5,3.8 10.5,11.4 2,11.4" /><polygon points="11.8,3.6 22,2 22,11.4 11.8,11.4" /><polygon points="2,12.6 10.5,12.6 10.5,20.2 2,19" /><polygon points="11.8,12.6 22,12.6 22,22 11.8,20.4" /></g>,
  tTask: <g fill="none" stroke="#fff" strokeWidth="1.5"><rect x="6" y="7" width="11" height="10" /><path d="M3 3 H20 M3 21 H20 M21 7 V11 M21 14 V17" /></g>,
  tVideo: <><rect x="1" y="0" width="22" height="24" rx="5" fill="#fff" /><path d="M7 4 L19 11 C20 12 20 13 19 14 L7 21 C5 22 4 21 4 19 V6 C4 4 5 3 7 4 Z" fill="#1eb4f0" /><path d="M4 6 C4 4 5 3 7 4 L12 7 L4 19 Z" fill="#f8a820" /><path d="M4 19 C4 21 5 22 7 21 L15 16 L9 12 Z" fill="#10c090" /><polygon points="9,9 16,12.5 9,16" fill="#fff" /></>,
  tExplorer: <><path d="M1 6 V21 H23 V6 Z" fill="#f3c84a" /><path d="M1 3 H10 L12 6 H1 Z" fill="#f0a500" /><rect x="1" y="9" width="22" height="12" fill="#ffdd6a" /><rect x="7" y="14" width="10" height="4" fill="#2a8ae0" /><rect x="9" y="18" width="6" height="4" fill="#1c5aa8" /></>,
  tStore: <><path d="M2 7 H22 V20 C22 22 20 23 19 23 H5 C4 23 2 22 2 20 Z" fill="#f0f0f0" /><path d="M7 8 V4 C7 2 9 1 12 1 C15 1 17 2 17 4 V8" fill="none" stroke="#28a8e8" strokeWidth="2" /><rect x="7" y="10" width="4.6" height="4.6" fill="#f25022" /><rect x="12.4" y="10" width="4.6" height="4.6" fill="#7fba00" /><rect x="7" y="15.4" width="4.6" height="4.6" fill="#00a4ef" /><rect x="12.4" y="15.4" width="4.6" height="4.6" fill="#ffb900" /></>,
  tMail: <><polygon points="12,1 23,9 12,16 1,9" fill="#1068b8" /><rect x="1" y="9" width="22" height="14" fill="#2c9fe0" /><polygon points="1,9 12,16 23,9 23,11 12,19 1,11" fill="#bfe6fa" /></>,
  tFox: <><circle cx="12" cy="14" r="10" fill="#7a2fc8" /><path d="M12 1 C17 4 22 9 22 15 C22 20 18 24 12 24 C8 24 4 22 3 18 C6 20 9 20 12 18 C16 15 16 9 12 1 Z" fill="#fbb01c" /><path d="M3 8 C2 14 3 18 5 20 C9 23 14 22 17 18 C14 19 10 18 9 14 C9 10 7 6 3 8 Z" fill="#f2512a" /><circle cx="12" cy="13" r="4.6" fill="#7a2fc8" /><circle cx="12" cy="13" r="2.4" fill="#c84ac8" /></>,
  tEdge: <><circle cx="12" cy="12" r="11" fill="#1474c4" /><path d="M3 8 C6 1 19 0 23 10 C23 14 19 17 15 15 C18 12 14 9 11 9 C6 8 3 12 3 17 Z" fill="#38c890" /><path d="M10 23 C6 21 6 14 11 11 C10 17 16 20 22 17 C20 21 15 24 10 23 Z" fill="#0c4e90" /></>,
  tBird: <><rect x="1" y="0" width="22" height="24" rx="3" fill="#3f87f0" /><path d="M4 5 C8 8 11 9 14 8 L19 4 L17 10 L19 12 L14 14 L11 19 L10 14 C7 12 5 9 4 5 Z" fill="#fff" /></>,
  tShield: <><rect x="1" y="0" width="22" height="24" rx="4" fill="#3a8af0" /><path d="M12 4 L19 7 V13 C19 17 15 19 12 20 C9 19 5 17 5 13 V7 Z" fill="none" stroke="#fff" strokeWidth="1.7" /><path d="M9 11 V12 M15 11 V12 M9 14 C10 16 14 16 15 14" stroke="#fff" strokeWidth="1.3" fill="none" /></>,
  tNx: <><circle cx="11" cy="13" r="9" fill="#2e7ce0" /><path d="M5 11 C9 8 15 9 19 15 C15 17 8 17 5 15 Z" fill="#55c0e8" /><polygon points="5,0 17,3 11,10" fill="#d03050" /><path d="M1 22 C9 22 18 17 23 9 C20 18 12 24 2 24 Z" fill="#f0b020" /></>,
  tSnip: <><path d="M13 2 C7 3 5 8 6 14" fill="none" stroke="#d83a10" strokeWidth="3" /><path d="M14 2 C18 5 18 10 17 15" fill="none" stroke="#d83a10" strokeWidth="2" /><polygon points="13,3 15,3 14,15 10,17" fill="#d8d8d8" /><circle cx="8" cy="20" r="3" fill="none" stroke="#2c8cd8" strokeWidth="2" /><circle cx="15" cy="21" r="3" fill="none" stroke="#2c8cd8" strokeWidth="2" /></>,
  trChev: <path d="M3 16 L12 8 L21 16" fill="none" stroke="#fff" strokeWidth="1.5" />,
  trNet: <g fill="none" stroke="#fff" strokeWidth="1.3"><rect x="5" y="4" width="18" height="13" /><path d="M14 17 V21 M9 21 H19" /><rect x="1" y="2" width="7" height="8" fill="#1d2e42" /><rect x="3.4" y="4" width="2.4" height="2.4" fill="#fff" stroke="none" /></g>,
  trMic: <g fill="#fff"><rect x="8" y="2" width="8" height="14" rx="4" /><path d="M5 12 C5 22 19 22 19 12" fill="none" stroke="#fff" strokeWidth="1.3" /><path d="M12 19 V22 M8 22.5 H16" stroke="#fff" strokeWidth="1.3" /></g>,
  trVol: <g fill="none" stroke="#fff" strokeWidth="1.3"><path d="M3 9 V15 H7 L12 20 V4 L7 9 Z" /><path d="M15 9 C16.5 11 16.5 13 15 15 M18 6 C20.5 10 20.5 14 18 18 M20.5 3 C24 9 24 15 20.5 21" /></g>,
  trQ: <><rect x="1" y="0" width="22" height="24" rx="3" fill="#2b8af0" /><circle cx="12" cy="11" r="6" fill="none" stroke="#fff" strokeWidth="3" /><path d="M13 15 L19 21" stroke="#fff" strokeWidth="2" /><circle cx="18" cy="20" r="2" fill="#b8f020" /></>,
  trNote: <path d="M3 3 H22 V17 H15 L12 20 L9 17 H3 Z" fill="none" stroke="#fff" strokeWidth="1.3" />,
  chevBlue: <path d="M3 6 L11 17 L19 6" fill="none" stroke="#0f7698" strokeWidth="3" />,
};

const Ico = ({ n, s = 20 }: { n: string; s?: number }) => (
  <IcoSvg width={s} height={s} viewBox="0 0 24 24">{I[n]}</IcoSvg>
);

/* ---------- toolbars data ---------- */
type Item = { k: "t"; w: number; n: string; on?: boolean; s?: number; red?: boolean } | { k: "c"; w: number } | { k: "s"; l: number; r: number } | { k: "x"; txt: string; ml?: number } | { k: "m"; w: number };
const t = (w: number, n: string, on?: boolean, s?: number, red?: boolean): Item => ({ k: "t", w, n, on, s, red });
const c = (w: number): Item => ({ k: "c", w });
const s = (l: number, r: number): Item => ({ k: "s", l, r });

const renderItems = (items: Item[]) =>
  items.map((it, i) => {
    if (it.k === "t") return <Cell key={i} $w={it.w}><CellFace $on={it.on} $red={it.red}><Ico n={it.n} s={it.s ?? 18} /></CellFace></Cell>;
    if (it.k === "c") return <Cell key={i} $w={it.w}><CaretGlyph /></Cell>;
    if (it.k === "m") return <Cell key={i} $w={it.w}><MoreGlyph><CaretGlyph /></MoreGlyph></Cell>;
    if (it.k === "x") return <QatText key={i} $ml={it.ml}>{it.txt}</QatText>;
    return <VSep key={i} $l={it.l} $r={it.r} />;
  });

const qat: Item[] = [
  s(6, 4), t(22, "save"), s(3, 3), t(22, "undo"), c(14), t(20, "redo", false), s(4, 4), t(22, "cut"), t(22, "copy"), t(24, "paste"), t(22, "pasteTarget"), s(3, 0),
  t(28, "chamfer", false, 19), c(8), s(4, 0), t(28, "eraser"), s(0, 3), t(22, "switchWin", false, 17), { k: "x", txt: "切换窗口", ml: 2 }, t(26, "window", false, 17), { k: "x", txt: "窗口", ml: 1 }, c(11), { k: "m", w: 10 },
];
const selA: Item[] = [
  t(25, "f1"), t(25, "f2"), t(21, "f3", false, 15, true), c(12), t(28, "f4"), t(20, "f5"), t(30, "sel1"), t(20, "sel2", false, 17), c(16), t(24, "sel3"), t(24, "sel4"),
  t(27, "snapA", true), t(24, "sl", true, 17), t(26, "slm", true, 17), t(23, "sCurve"), t(26, "zig", true), t(25, "wave", true), t(25, "tangent"), t(25, "cen", true), t(25, "quad"), t(25, "crossX", true), t(25, "slm", true, 17), t(25, "bend"), t(25, "mesh"), t(25, "grid", false, 16), s(6, 6.5),
  t(25, "vzoom"), t(25, "vpan"), t(25, "vrot"), t(25, "vpersp"), t(25, "vcopy"), t(27, "vlayout"), c(10), t(25, "vshade"), c(11), t(29, "vcube"), c(7), t(27, "vflag"), c(11), s(7, 0),
];

const Arrow3 = ({ dim }: { dim?: boolean }) => (
  <><CaretGlyph $up $c={dim ? "#9f9f9f" : "#333"} /><CaretGlyph $c={dim ? "#9f9f9f" : "#222"} /><MoreGlyph><CaretGlyph /></MoreGlyph></>
);
const Foot = ({ label, pl }: { label?: string; pl?: number }) => (
  <GroupFoot $pl={pl}><GroupLabel>{label}</GroupLabel><GroupCorner><CaretGlyph /></GroupCorner></GroupFoot>
);
const BigBtn = ({ w, ml, n, label, caret, box, s: size }: { w: number; ml?: number; n: string; label: string; caret?: boolean; box?: boolean; s?: number }) => (
  <Big $w={w} $ml={ml}>
    <BigIcon $box={box}><Ico n={n} s={size ?? 30} /></BigIcon>
    <BigLabel>{label}</BigLabel>
    {caret && <BigCaret><CaretGlyph /></BigCaret>}
  </Big>
);
const Small = ({ n, txt, caret }: { n: string; txt: string; caret?: boolean }) => (
  <SmallRow><Ico n={n} s={16} /><span>{txt}</span>{caret && <CaretGlyph $ml={5} />}</SmallRow>
);

/* ---------- tree ---------- */
type TreeRow = { txt?: string; n?: string; pl?: number; exp?: "+" | "-"; top?: boolean; ok?: boolean; bold?: boolean; tick?: boolean; child?: boolean; last?: boolean; horiz?: boolean };
const tree: TreeRow[] = [
  { txt: "模型视图", n: "tView", pl: 18, exp: "+", top: true },
  { txt: "摄像机", n: "tCam", pl: 21, exp: "+", top: true, tick: true },
  { txt: "用户表达式", n: "tExpr", pl: 18, exp: "+", top: true },
  { txt: "非时间戳记几何体", n: "tFolder", pl: 18, top: true, horiz: true },
  { txt: "模型历史记录", n: "tFolder", pl: 18, exp: "-", top: true, last: true },
  { txt: "基准坐标系 (0)", n: "tDatum", pl: 40, child: true, ok: true },
  { txt: "旋转 (1)", n: "tRev", pl: 40, child: true, ok: true },
  { txt: "拉伸 (2)", n: "tExt", pl: 40, child: true, ok: true },
  { txt: "拉伸 (3)", n: "tExt", pl: 40, child: true, ok: true },
  { txt: "边倒圆 (4)", n: "tBlend", pl: 40, child: true, ok: true },
  { txt: "倒斜角 (5)", n: "tCham", pl: 40, child: true, ok: true, bold: true, last: true },
];
const allRows: TreeRow[] = [...tree, ...Array.from({ length: 14 }, () => ({} as TreeRow))];

const railItems: { mt: number; n: string; active?: boolean; s?: number }[] = [
  { mt: -2, n: "gear", s: 16 }, { mt: 20, n: "railAsm", s: 24 }, { mt: 10, n: "railCon", s: 24 }, { mt: 6, n: "railPart", s: 24, active: true }, { mt: 6, n: "railBook", s: 25 },
  { mt: 26, n: "railInfo", s: 25 }, { mt: 22, n: "railDoc", s: 23 }, { mt: 23, n: "railClock", s: 24 }, { mt: 12, n: "railRole", s: 24 }, { mt: 13, n: "railRole2", s: 24 }, { mt: 12, n: "railTool", s: 24 },
];

/* ---------- model ---------- */
const smooth = (pts: number[][], closed = true) => {
  const n = pts.length;
  const g = (i: number) => (closed ? pts[(i + n) % n] : pts[Math.max(0, Math.min(n - 1, i))]);
  let d = `M${pts[0][0]},${pts[0][1]}`;
  for (let i = 0; i < (closed ? n : n - 1); i++) {
    const [p0, p1, p2, p3] = [g(i - 1), g(i), g(i + 1), g(i + 2)];
    d += ` C${(p1[0] + (p2[0] - p0[0]) / 6).toFixed(1)},${(p1[1] + (p2[1] - p0[1]) / 6).toFixed(1)} ${(p2[0] - (p3[0] - p1[0]) / 6).toFixed(1)},${(p2[1] - (p3[1] - p1[1]) / 6).toFixed(1)} ${p2[0]},${p2[1]}`;
  }
  return closed ? d + " Z" : d;
};
const slot = smooth([[727, 441], [747, 439], [760, 445], [765, 453], [760, 462], [727, 472], [680, 493], [650, 517], [642, 538], [645, 562], [657, 583], [658, 590], [650, 598], [633, 601], [613, 598], [603, 588], [597, 573], [588, 543], [600, 510], [630, 480], [677, 453]]);
const slotGray = "M597,573 Q612,549 642,533 L641,600 Q622,603 612,597 Q602,589 597,573 Z";
const holeOuter = smooth([[746, 588], [738, 580], [747, 568], [770, 563], [790, 557], [820, 554], [860, 558], [887, 580], [889, 593], [880, 612], [853, 622], [817, 626], [780, 622], [755, 610], [748, 597]]);
const holeFloor = "M746,588 C755,586 765,585 771,582 C785,577 802,575 820,575 C850,575 870,585 886,604 C875,617 860,622 817,626 C790,625 762,620 752,606 Z";
const TOP = "#6ee8ff";
const LINE = "#2d3b44";

const Model = () => (
  <ModelSvg viewBox="363 205 1077 633">
    <defs>
      <linearGradient id="side" gradientUnits="userSpaceOnUse" x1="569" y1="0" x2="1068" y2="0">
        <stop offset="0" stopColor="#428cca" /><stop offset=".15" stopColor="#3f82bb" /><stop offset=".34" stopColor="#326796" /><stop offset=".5" stopColor="#34699b" /><stop offset=".8" stopColor="#3d7eb7" /><stop offset="1" stopColor="#448fd0" />
      </linearGradient>
      <linearGradient id="bore" gradientUnits="userSpaceOnUse" x1="665" y1="0" x2="973" y2="0">
        <stop offset="0" stopColor="#4690ce" /><stop offset=".25" stopColor="#3f85c0" /><stop offset=".55" stopColor="#366c9c" /><stop offset=".75" stopColor="#33689a" /><stop offset="1" stopColor="#3a79ae" />
      </linearGradient>
      <linearGradient id="slotW" gradientUnits="userSpaceOnUse" x1="588" y1="0" x2="767" y2="0">
        <stop offset="0" stopColor="#4690ce" /><stop offset=".6" stopColor="#3f86c0" /><stop offset=".78" stopColor="#39749f" /><stop offset=".82" stopColor="#3f83bb" /><stop offset="1" stopColor="#366e9e" />
      </linearGradient>
      <linearGradient id="holeW" gradientUnits="userSpaceOnUse" x1="738" y1="0" x2="889" y2="0">
        <stop offset="0" stopColor="#3c7fb6" /><stop offset=".2" stopColor="#3f85c0" /><stop offset=".5" stopColor="#3d7cb2" /><stop offset="1" stopColor="#32689a" />
      </linearGradient>
      <linearGradient id="fillet" gradientUnits="userSpaceOnUse" x1="665" y1="0" x2="973" y2="0">
        <stop offset="0" stopColor="#88eeff" /><stop offset=".5" stopColor="#86ecff" /><stop offset=".8" stopColor="#6cccf0" /><stop offset="1" stopColor="#4a98d0" />
      </linearGradient>
      <clipPath id="boreClip"><ellipse cx="819" cy="549" rx="154" ry="77" /></clipPath>
      <filter id="soft" x="-5%" y="-5%" width="110%" height="110%"><feGaussianBlur stdDeviation="2.4" /></filter>
      <linearGradient id="coneW" x1="0" y1="0" x2="1" y2="0"><stop offset="0" stopColor="#8b8b8b" /><stop offset="1" stopColor="#fff" /></linearGradient>
    </defs>
    <path d="M570,549 L569,605 A249,132 0 0 0 1067,605 L1068,549 Z" fill="url(#side)" stroke={LINE} strokeWidth=".8" />
    <ellipse cx="819" cy="549" rx="249" ry="126" fill={TOP} stroke={LINE} strokeWidth=".8" />

    <path d={slot} fill="url(#slotW)" />
    <path d={slotGray} fill="#dfe0e2" />
    <path d="M727,441 L727,472" stroke={LINE} strokeWidth=".9" />
    <path d="M641,533 L641,600" stroke="#7a8f9e" strokeWidth=".6" />
    <path d={slot} fill="none" stroke={LINE} strokeWidth=".8" />

    <ellipse cx="819" cy="549" rx="154" ry="77" fill="url(#bore)" />
    <g clipPath="url(#boreClip)">
      <ellipse cx="819" cy="578" rx="155" ry="76" fill="#3d84c4" stroke={LINE} strokeWidth=".9" />
      <ellipse cx="819" cy="586" rx="151" ry="74" fill="none" stroke="url(#fillet)" strokeWidth="7" filter="url(#soft)" />
      <ellipse cx="819" cy="592" rx="146" ry="74" fill={TOP} stroke={LINE} strokeWidth=".8" />
      <rect x="665" y="600" width="308" height="40" fill={TOP} />
    </g>
    <ellipse cx="819" cy="549" rx="154" ry="77" fill="none" stroke={LINE} strokeWidth=".9" />

    <path d={holeOuter} fill="url(#holeW)" />
    <path d={holeFloor} fill="#dfe0e2" />
    <path d="M770.500,563 L770.500,583" stroke={LINE} strokeWidth=".9" />
    <path d={holeOuter} fill="none" stroke={LINE} strokeWidth=".8" />
    <path d={holeFloor} fill="none" stroke={LINE} strokeWidth=".5" />

    <g fill="none" stroke="#1616e0" strokeWidth="1.1">
      <path d="M819,553 L843,522 L843,578 L819,610 M819,553 L882,566 L881,612 M843,578 L880,590 M819,610 L860,620" />
      <path d="M819,610 L819,503" strokeWidth="1.5" />
      <path d="M810,610 H827 M818,602 V619" strokeWidth="2.4" />
    </g>
    <polygon points="820,496 816,510 824,510" fill="#0b1ab8" />
    <text x="820" y="495" fontFamily="Noto Sans, sans-serif" fontSize="13" fill="#1a3ad8" textAnchor="middle">Z</text>
    <g fill="none" stroke="#d5d8da" strokeWidth="1">
      <path d="M843,578 L864,551" />
      <path d="M860,581 L905,593 L881,623 L881,600" />
      <path d="M881,623 L930,634" />
    </g>
    <circle cx="862" cy="555" r="3" fill="#8d9093" />
    <text x="870" y="550" fontFamily="Noto Sans, sans-serif" fontSize="13" fill="#cfd3d6" textAnchor="middle">Y</text>
    <polygon points="941,637 925,630 925,637" fill="url(#coneW)" />
    <text x="948" y="643" fontFamily="Noto Sans, sans-serif" fontSize="13" fill="#cfd3d6" textAnchor="middle">X</text>

    <g>
      <polygon points="418,756 437,752 446,760 446,782 426,786 418,778" fill="#d4d5d6" fillOpacity=".75" stroke="#b9baba" strokeWidth="1" />
      <path d="M418,756 L427,765 L446,760 M427,765 V786" fill="none" stroke="#c2c3c3" />
      <path d="M417,782 L432,758" stroke="#c4d8c4" strokeWidth="1.6" />
      <path d="M417,781 V760" stroke="#0c2fb8" strokeWidth="2.6" />
      <polygon points="417,752 413,762 421,762" fill="#0c2fb8" />
      <path d="M417,781 L440,787" stroke="#d03434" strokeWidth="2.6" />
      <polygon points="452,790 439,783 438,790" fill="#d02020" />
      <circle cx="417" cy="781" r="4.2" fill="#b9bcbe" stroke="#9b9d9f" strokeWidth=".5" />
      <text x="417" y="749" fontFamily="Noto Sans, sans-serif" fontSize="12" fill="#2a4ad0" textAnchor="middle">Z</text>
      <text x="455" y="794" fontFamily="Noto Sans, sans-serif" fontSize="12" fill="#d84040" textAnchor="middle">X</text>
    </g>
  </ModelSvg>
);

const tasks: { n: string; run?: boolean; active?: boolean }[] = [
  { n: "tVideo" }, { n: "tExplorer", run: true }, { n: "tStore" }, { n: "tMail" }, { n: "tFox", run: true }, { n: "tEdge" }, { n: "tBird" }, { n: "tShield" }, { n: "tNx", run: true }, { n: "tSnip", run: true, active: true },
];

const nameMargin = (r: TreeRow) => (r.tick ? -3 : r.child ? -2 : 0);

export default function App() {
  return (
    <Page>
      <Global />
      <TitleBar>
        <Logo>NX</Logo>
        <Qat>{renderItems(qat)}</Qat>
        <Title>NX 12 - 建模</Title>
        <Siemens>SIEMENS</Siemens>
        <WinBtns>
          <WinBtn>
            <svg width="12" height="12" viewBox="0 0 12 12"><path d="M1 10 H10" stroke="#333" strokeWidth="1.6" /></svg>
          </WinBtn>
          <WinBtn>
            <svg width="12" height="12" viewBox="0 0 12 12" fill="none" stroke="#333"><rect x=".5" y="3.500" width="8" height="8" /><path d="M3.500 3 V.5 H11.500 V8.500 H9" /></svg>
          </WinBtn>
          <WinBtn>
            <svg width="13" height="13" viewBox="0 0 13 13"><path d="M1 1 L12 12 M12 1 L1 12" stroke="#333" strokeWidth="1.5" /></svg>
          </WinBtn>
        </WinBtns>
      </TitleBar>

      <TabBar>
        <FileTab>文件(F)</FileTab>
        <Tab $w={52} $active>主页</Tab>
        {["装配", "曲线", "分析", "视图", "渲染", "工具"].map(x => <Tab key={x} $w={52}>{x}</Tab>)}
        <Tab $w={78}>应用模块</Tab>
        <Tab $w={108} $wide>星空 V6.936F</Tab>
        <Search><span>查找命令</span><Ico n="find" s={15} /></Search>
        <TabTools>
          <Ico n="frame" s={23} />
          <CollapseSvg width="23" height="16" viewBox="0 0 23 16"><path d="M3 13 L11.500 4 L20 13" fill="none" stroke="#333" strokeWidth="5" /><path d="M3 13 L11.500 4 L20 13" fill="none" stroke="#fff" strokeWidth="3" /></CollapseSvg>
          <HelpSvg width="20" height="20" viewBox="0 0 20 20"><circle cx="10" cy="10" r="9.500" fill="#4474cc" /><text x="10" y="15" textAnchor="middle" fill="#fff" fontSize="14" fontWeight="700" fontFamily="Liberation Sans, sans-serif">?</text></HelpSvg>
        </TabTools>
      </TabBar>

      <Ribbon>
        <Group $w={178}>
          <GroupBody>
            <BigBtn w={57} n="sketch" label="草图" s={31} />
            <Gallery $w={98}>
              {["skSpline", "skRect", "skLine", "skArc", "skCircle", "skPlus"].map(n => <Ico key={n} n={n} s={24} />)}
            </Gallery>
            <Arrows $w={20}><Arrow3 /></Arrows>
          </GroupBody>
          <Foot label="直接草图" />
        </Group>
        <Group $w={369}>
          <GroupBody $pl={1}>
            <BigBtn w={66} n="datum" label="基准平面" caret s={31} />
            <BigBtn w={26} n="extrude" label="拉伸" caret s={32} />
            <BigBtn w={54} n="hole" label="孔" s={30} />
            <SmallCol $w={71}>
              <Small n="pattern" txt="阵列特征" />
              <Small n="unite" txt="合并" caret />
              <Small n="shell" txt="抽壳" />
            </SmallCol>
            <BigBtn w={36} n="blend" label="边倒圆" caret s={31} />
            <SmallCol $w={62} $ml={7}>
              <Small n="chamfer" txt="倒斜角" />
              <Small n="trim" txt="修剪体" />
              <Small n="draft" txt="拔模" />
            </SmallCol>
            <BigBtn w={38} ml={3} n="more1" label="更多" caret box s={20} />
          </GroupBody>
          <Foot label="特征" />
        </Group>
        <Group $w={245}>
          <GroupBody $pl={1}>
            <BigBtn w={55} n="moveFace" label="移动面" s={32} />
            <SmallCol $w={84} $ml={-2}>
              <Small n="pull" txt="拉出面" />
              <Small n="offset" txt="偏置区域" />
              <Small n="resize" txt="调整面大小" />
            </SmallCol>
            <SmallCol $w={60}>
              <Small n="replace" txt="替换面" />
              <Small n="del" txt="删除面" />
            </SmallCol>
            <BigBtn w={38} ml={4} n="sync" label="更多" caret box s={20} />
          </GroupBody>
          <Foot label="同步建模" />
        </Group>
        <Group $w={51}>
          <GroupBody>
            <IconGrid>
              <Ico n="gearA" s={18} /><Ico n="gearB" s={18} /><Ico n="gearC" s={17} />
            </IconGrid>
          </GroupBody>
          <Foot label="齿轮..." />
        </Group>
        <Group $w={44}>
          <GroupBody $pl={1}><BigBtn w={42} n="surface" label="曲面" caret s={32} /></GroupBody>
        </Group>
        <Group $w={66}>
          <GroupBody>
            <Gallery $w={45} $ml={4}>
              {["lay1", "lay2", "lay3", "lay4", "lay5"].map(n => <Ico key={n} n={n} s={18} />)}
            </Gallery>
            <Arrows $w={17}><Arrow3 dim /></Arrows>
          </GroupBody>
          <Foot label="图层" pl={3} />
        </Group>
        <Group $w={64}>
          <GroupBody $pl={3}><BigBtn w={60} n="moveObj" label="移动对象" s={30} /></GroupBody>
        </Group>
        <Group $w={141}>
          <GroupBody>
            <ListGallery $w={117} $ml={3}>
              <ListRow><Ico n="wcsAbs" s={18} /><span>WCS 设为绝对</span></ListRow>
              <ListRow><Ico n="wcsDyn" s={18} /><span>WCS 动态</span></ListRow>
              <ListRow><Ico n="wcsShow" s={18} /><span>显示 WCS</span></ListRow>
            </ListGallery>
            <Arrows $w={20}><Arrow3 /></Arrows>
          </GroupBody>
          <Foot label="更多" />
        </Group>
        <RibbonEnd><CaretGlyph /></RibbonEnd>
      </Ribbon>

      <SelBar>
        <MenuBtn><Ico n="menu" s={16} /><span>菜单(<u>M</u>)</span><CaretGlyph /></MenuBtn>
        <VSep />
        <Select $w={133} $ml={12}><span>无选择过滤器</span><CaretGlyph /></Select>
        <Select $w={140} $ml={9}><span>整个装配</span><CaretGlyph /></Select>
        <Cell $w={3} />
        {renderItems(selA)}
        <Spacer />
        <Cell $w={15}><CaretGlyph /></Cell>
      </SelBar>

      <Main>
        <Rail>
          {railItems.map(r => <RailItem key={r.n} $mt={r.mt} $active={r.active}><Ico n={r.n} s={r.s} /></RailItem>)}
        </Rail>
        <NavPanel>
          <NavHead><span>部件导航器</span><MaxBox /></NavHead>
          <TreeBox>
            <TreeHead>
              <HeadCell $w={200}><span>名称</span><CaretGlyph $up $big /></HeadCell>
              <HeadCell $w={100}><span>最新</span></HeadCell>
              <HeadCell $w={12}><span>附</span></HeadCell>
            </TreeHead>
            <Rows>
              {allRows.map((r, i) => (
                <Row key={i} $alt={i % 2 === 1}>
                  {r.top && <DotV $l={9} $t={i === 0 ? 8 : -1} $h={i === 4 ? 10 : 21} />}
                  {(r.exp || r.horiz) && <DotH $l={9} $w={9} />}
                  {r.child && <DotV $l={28} $t={-1} $h={r.last ? 11 : 21} />}
                  {r.child && <DotH $l={28} $w={12} />}
                  {r.exp && <Expander>{r.exp}</Expander>}
                  <NameCell $pl={r.pl ?? 0} $bold={r.bold}>
                    {r.child && <Check><Ico n="tick" s={13} /></Check>}
                    {r.tick && <TickSlot><Ico n="tick" s={14} /></TickSlot>}
                    {r.n && <Ico n={r.n} s={16} />}
                    {r.txt && <NameText $ml={nameMargin(r)}>{r.txt}</NameText>}
                  </NameCell>
                  <StateCell>{r.ok && <Ico n="tick" s={15} />}</StateCell>
                </Row>
              ))}
            </Rows>
            <ScrollBar>
              <ScrollTrack>
                <ScrollArrow><svg width="6" height="9" viewBox="0 0 6 9"><path d="M5 1 L1.500 4.500 L5 8" fill="none" stroke="#333" strokeWidth="1.500" /></svg></ScrollArrow>
                <ScrollThumb />
                <ScrollRest />
                <ScrollArrow><svg width="6" height="9" viewBox="0 0 6 9"><path d="M1 1 L4.500 4.500 L1 8" fill="none" stroke="#333" strokeWidth="1.500" /></svg></ScrollArrow>
              </ScrollTrack>
            </ScrollBar>
          </TreeBox>
          <Splitter />
          {["相关性", "细节", "预览"].map(x => (
            <Accordion key={x}><span>{x}</span><Ico n="chevBlue" s={14} /></Accordion>
          ))}
        </NavPanel>
        <Work>
          <DocStrip>
            <DocTab>
              <Ico n="partTab" s={15} /><DocName>_model1.prt</DocName>
              <Ico n="popout" s={12} /><DocClose>✕</DocClose>
            </DocTab>
          </DocStrip>
          <Viewport><Model /></Viewport>
        </Work>
      </Main>

      <Status>
        <span>选择对象并使用 MB3，或者双击某一对象</span>
        <StatusIcons>
          <StatusFlag><Ico n="flagGray" s={13} /></StatusFlag>
          <Ico n="frame" s={15} />
        </StatusIcons>
      </Status>

      <Taskbar>
        <TaskCell $w={47}><Ico n="tWin" s={17} /></TaskCell>
        <TaskCell $w={49.5}><Ico n="tTask" s={18} /></TaskCell>
        <TaskCell $w={2} />
        {tasks.map(x => <TaskCell key={x.n} $w={49} $run={x.run} $active={x.active}><Ico n={x.n} s={25} /></TaskCell>)}
        <Spacer />
        <TaskCell $w={24}><Ico n="trChev" s={15} /></TaskCell>
        <TaskCell $w={24}><Ico n="trNet" s={17} /></TaskCell>
        <TaskCell $w={23}><Ico n="trMic" s={17} /></TaskCell>
        <TaskCell $w={24}><Ico n="trVol" s={17} /></TaskCell>
        <TaskCell $w={26}><TrayText>中</TrayText></TaskCell>
        <TaskCell $w={30}><Ico n="trQ" s={16} /></TaskCell>
        <Clock>23:06<br />2021/10/01</Clock>
        <TaskCell $w={36}><Ico n="trNote" s={18} /></TaskCell>
        <TaskCell $w={15} />
        <Watermark>UG爱好者论坛@NX小白白</Watermark>
      </Taskbar>
      <Progress />
    </Page>
  );
}
